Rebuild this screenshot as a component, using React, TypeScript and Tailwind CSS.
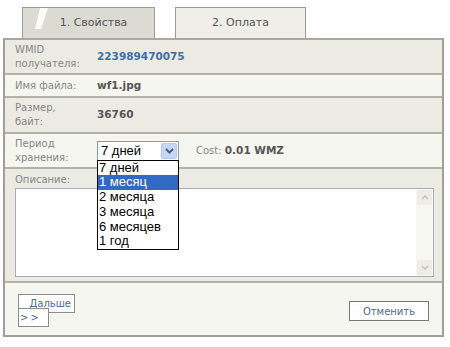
import React from "react";

const label = "text-[10px] leading-[14px] text-[#858585]";
const value = "text-[10.5px] font-bold text-[#555]";

const options = ["7 дней", "1 месяц", "2 месяца", "3 месяца", "6 месяцев", "1 год"];

const Row = ({ dark, h, children }: { dark?: boolean; h: string; children: React.ReactNode }) => (
  <div className={`flex items-center pl-[10px] border-b-2 border-[#b3b2aa] ${h} ${dark ? "bg-[#ecebe3]" : "bg-[#f6f6f1]"}`}>
    {children}
  </div>
);

const App = () => {
  return (
    <div className="w-[450px] h-[347px] bg-white" style={{ fontFamily: "'DejaVu Sans', Verdana, sans-serif" }}>
      <div className="flex items-end pl-[22px] pt-[7px] h-[38px] gap-[20px]">
        <div className="relative w-[133px] h-[31px] bg-[#dcdbd3] border border-b-0 border-[#9d9c95] flex items-center justify-center">
          <svg className="absolute left-[10px] top-0" width="16" height="22" viewBox="0 0 16 22">
            <polygon points="7,0 15,0 8,21 2,21" fill="#fbfbf8" />
          </svg>
          <span className="text-[11px] text-[#555] pl-[10px]">1. Свойства</span>
        </div>
        <div className="w-[131px] h-[31px] bg-[#efeee8] border border-b-0 border-[#9d9c95] flex items-center justify-center">
          <span className="text-[11px] text-[#555]">2. Оплата</span>
        </div>
      </div>
      <div className="ml-[3px] w-[441px] h-[299px] border-2 border-[#9f9e97] border-t-[#a9a8a0] flex flex-col">
        <Row dark h="h-[35px]">
          <div className={`${label} w-[82px]`}>WMID<br />получателя:</div>
          <div className="text-[10.5px] font-bold text-[#3f6ea8]">223989470075</div>
        </Row>
        <Row h="h-[23px]">
          <div className={`${label} w-[82px]`}>Имя файла:</div>
          <div className={value}>wf1.jpg</div>
        </Row>
        <Row dark h="h-[36px]">
          <div className={`${label} w-[82px]`}>Размер,<br />байт:</div>
          <div className={value}>36760</div>
        </Row>
        <Row h="h-[35px]">
          <div className={`${label} w-[82px]`}>Период<br />хранения:</div>
          <div className="relative z-10">
            <div className="w-[82px] h-[20px] bg-white border border-[#7f9db9] flex items-center justify-between pl-[3px] pr-[1px]">
              <span className="text-[13px] text-black" style={{ fontFamily: "'Liberation Sans', Arial, sans-serif" }}>7 дней</span>
              <div className="w-[16px] h-[16px] bg-[#c6d6f6] border border-[#b6c8ee] rounded-[2px] flex items-center justify-center">
                <svg width="9" height="6" viewBox="0 0 9 6"><path d="M1 1 L4.5 4.5 L8 1" stroke="#4d6185" strokeWidth="2" fill="none" /></svg>
              </div>
            </div>
            <div className="absolute left-0 top-[19px] w-[82px] bg-white border border-black flex flex-col" style={{ fontFamily: "'Liberation Sans', Arial, sans-serif" }}>
              {options.map((o, i) => (
                <div key={o} className={`text-[13px] leading-[14.8px] pl-[1px] ${i === 1 ? "bg-[#316ac5] text-white" : "text-black"}`}>{o}</div>
              ))}
            </div>
          </div>
          <div className="ml-[17px] text-[10px] text-[#858585]">Cost: <span className="font-bold text-[10.5px] text-[#555]">0.01 WMZ</span></div>
        </Row>
        <div className="bg-[#ecebe3] border-b-2 border-[#b3b2aa] pl-[10px] pr-[8px] pt-[4px] pb-[4px]">
          <div className="text-[10px] leading-[13px] text-[#858585]">Описание:</div>
          <div className="mt-[2px] h-[89px] bg-white border border-[#a5acb5] flex justify-end">
            <div className="w-[17px] bg-[#f7f7f2] flex flex-col justify-between items-center py-[1px]">
              <div className="w-[15px] h-[15px] bg-[#eeede5] flex items-center justify-center">
                <svg width="8" height="5" viewBox="0 0 8 5"><path d="M1 4 L4 1 L7 4" stroke="#c5c4b8" strokeWidth="1.5" fill="none" /></svg>
              </div>
              <div className="w-[15px] h-[15px] bg-[#eeede5] flex items-center justify-center">
                <svg width="8" height="5" viewBox="0 0 8 5"><path d="M1 1 L4 4 L7 1" stroke="#c5c4b8" strokeWidth="1.5" fill="none" /></svg>
              </div>
            </div>
          </div>
        </div>
        <div className="flex-1 bg-[#f6f6f1] flex items-start justify-between pl-[13px] pr-[13px] pt-[11px]">
          <div className="relative w-[57px] h-[33px]">
            <div className="absolute left-0 top-0 w-[57px] h-[19px] bg-white border border-[#8c8c8c] flex items-start justify-end pr-[3px] pt-[3px]">
              <span className="text-[10px] leading-[11px] text-[#4a6a9a]">Дальше</span>
            </div>
            <div className="absolute left-0 top-[14px] w-[31px] h-[19px] bg-white border border-[#8c8c8c] flex items-center">
              <span className="text-[10px] leading-[11px] text-[#4a6a9a] tracking-[2px] pl-[1px]">&gt;&gt;</span>
            </div>
          </div>
          <div className="mt-[7px] w-[80px] h-[20px] bg-white border border-[#777] flex items-center justify-center">
            <span className="text-[10px] text-[#4a6a9a]">Отменить</span>
          </div>
        </div>
      </div>
    </div>
  );
};

export default App;
